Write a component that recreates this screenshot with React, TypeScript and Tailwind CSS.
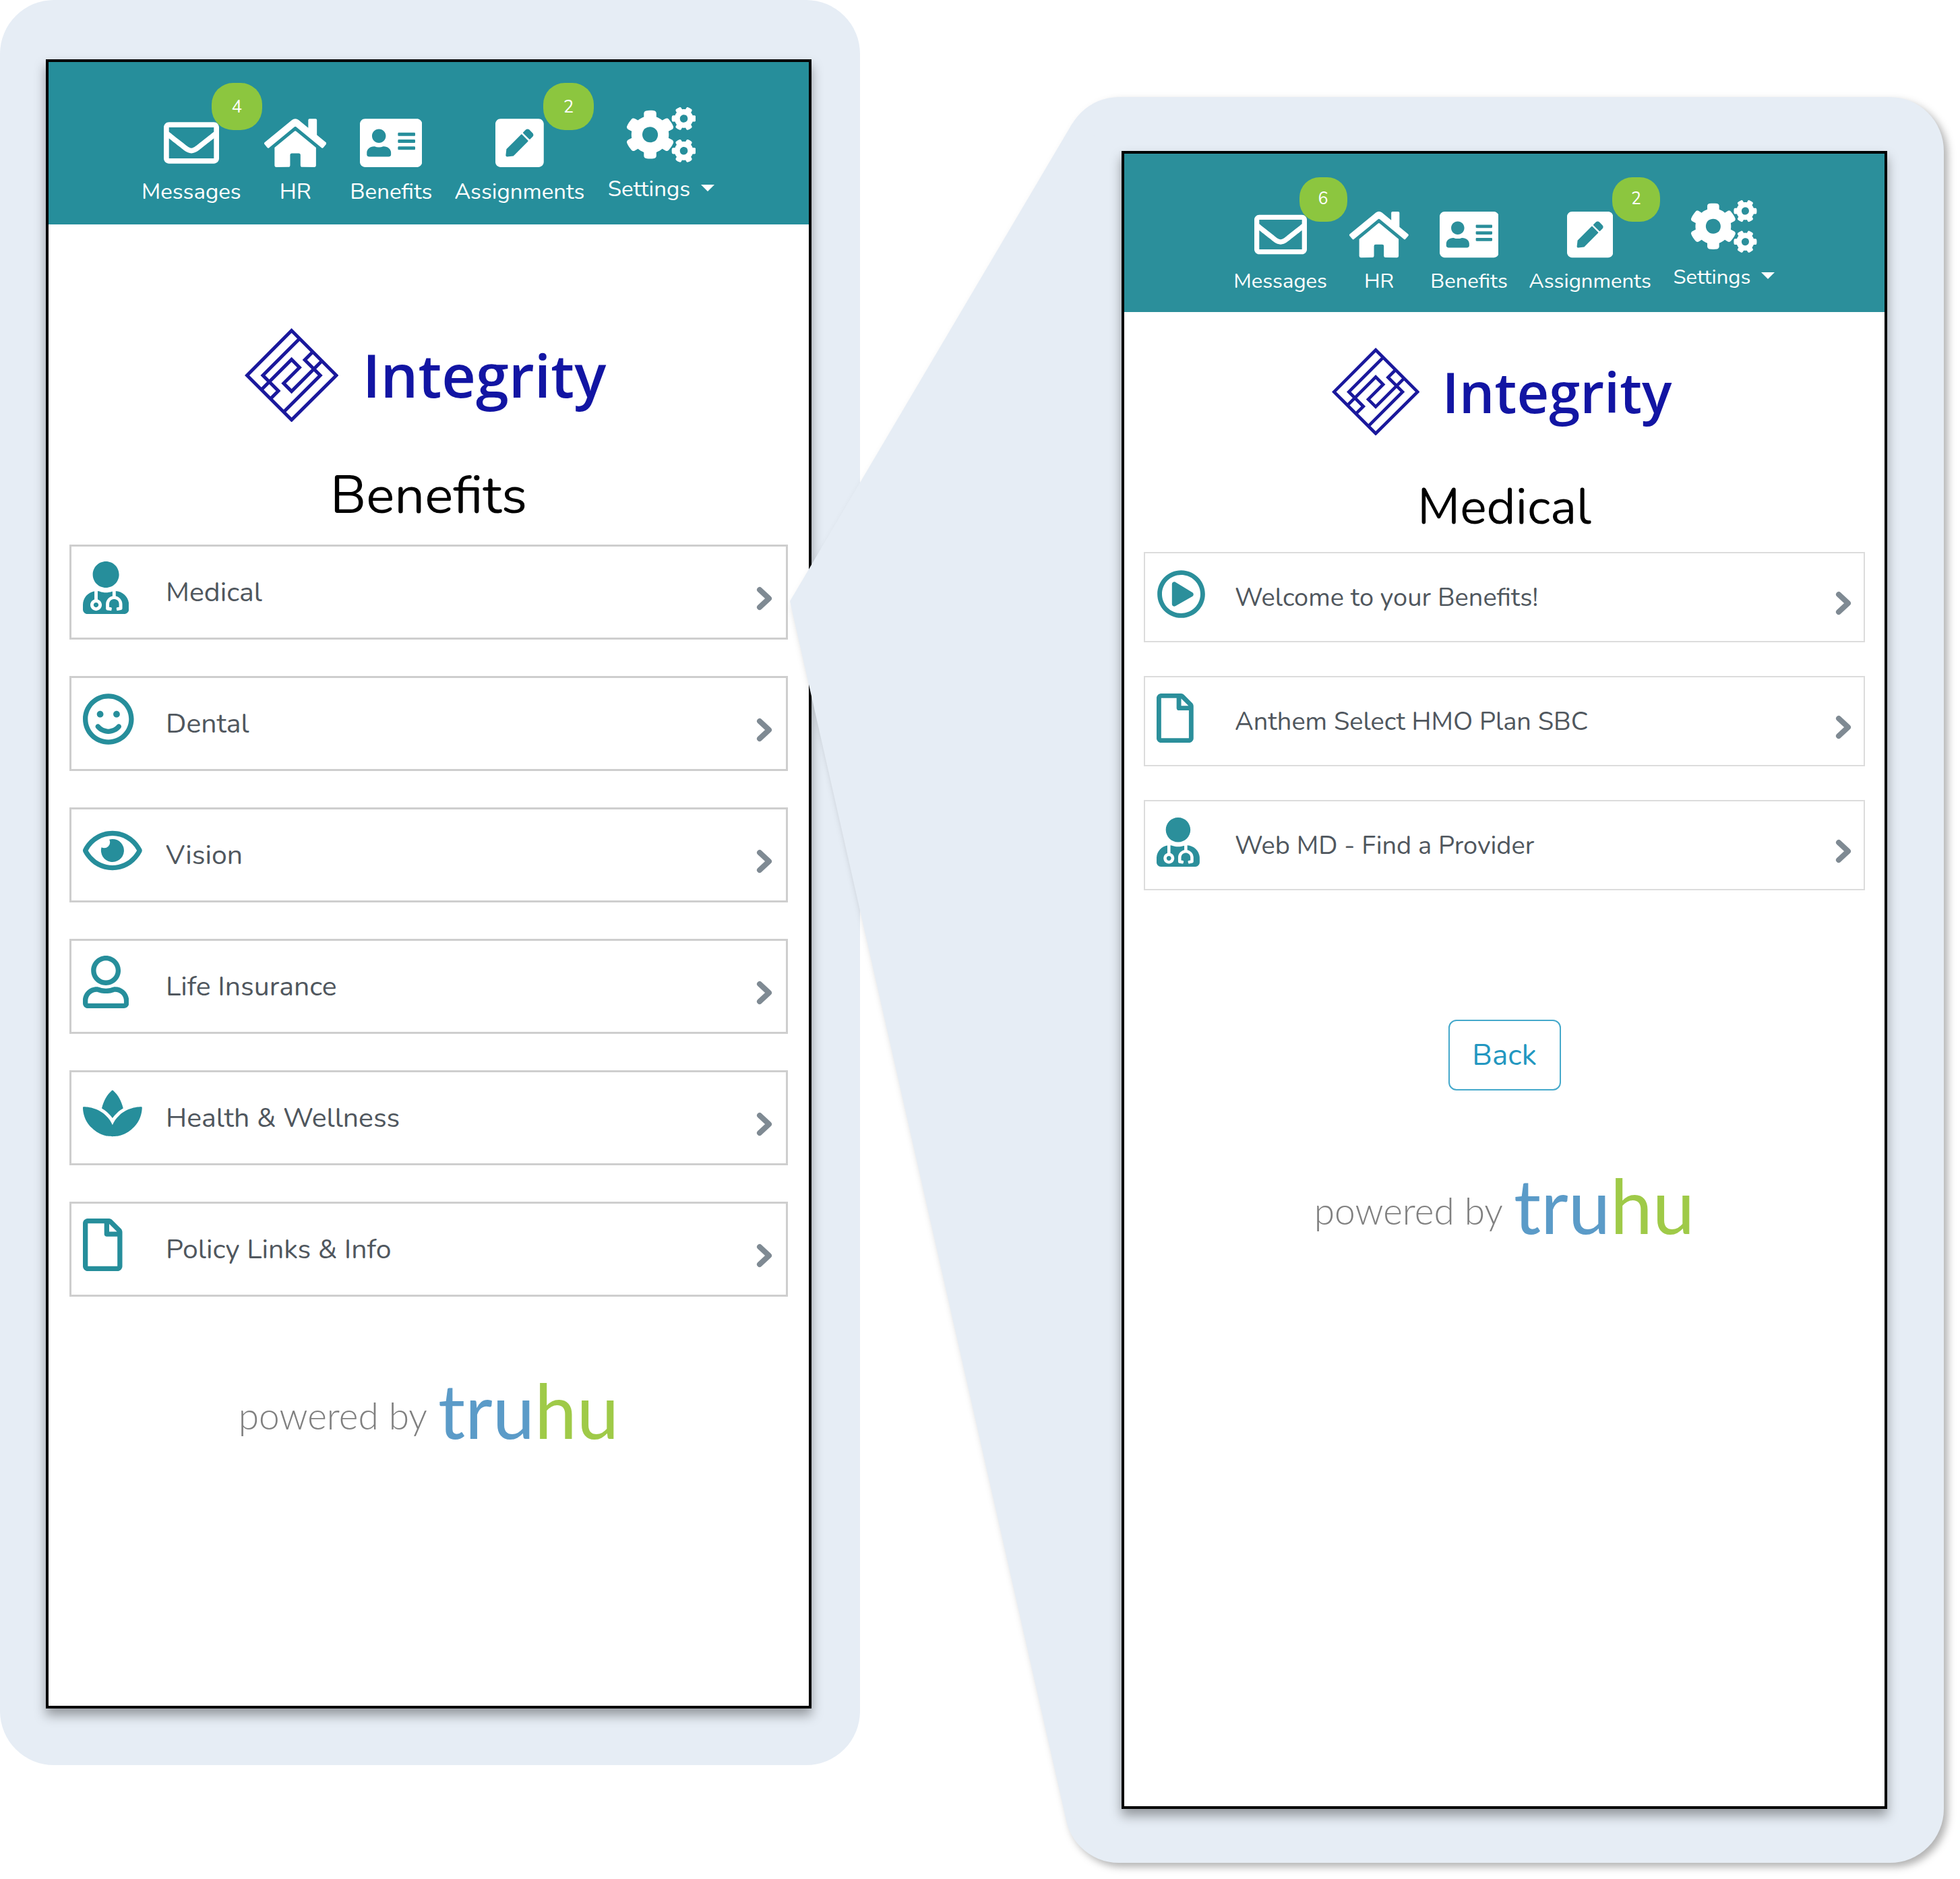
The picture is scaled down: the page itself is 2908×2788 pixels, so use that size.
import type { IconType } from "react-icons";
import {
  FaAddressCard,
  FaCogs,
  FaHome,
  FaPenSquare,
  FaRegEnvelope,
  FaRegEye,
  FaRegFile,
  FaRegPlayCircle,
  FaRegSmile,
  FaRegUser,
  FaSpa,
  FaUserMd,
} from "react-icons/fa";

type Size = "lg" | "md";
type Row = { icon: IconType; aspect: string; label: string };

const benefitRows: Row[] = [
  { icon: FaUserMd, aspect: "aspect-[7/8]", label: "Medical" },
  { icon: FaRegSmile, aspect: "aspect-[31/32]", label: "Dental" },
  { icon: FaRegEye, aspect: "aspect-[9/8]", label: "Vision" },
  { icon: FaRegUser, aspect: "aspect-[7/8]", label: "Life Insurance" },
  { icon: FaSpa, aspect: "aspect-[9/8]", label: "Health & Wellness" },
  { icon: FaRegFile, aspect: "aspect-[3/4]", label: "Policy Links & Info" },
];

const medicalRows: Row[] = [
  { icon: FaRegPlayCircle, aspect: "aspect-square", label: "Welcome to your Benefits!" },
  { icon: FaRegFile, aspect: "aspect-[3/4]", label: "Anthem Select HMO Plan SBC" },
  { icon: FaUserMd, aspect: "aspect-[7/8]", label: "Web MD - Find a Provider" },
];

function Badge({ count, size }: { count: number; size: Size }) {
  return (
    <span
      className={
        size === "lg"
          ? "absolute -top-12 left-[71px] flex h-[70px] w-[75px] items-center justify-center rounded-[32px] bg-[#8cc63f] text-[26px]"
          : "absolute -top-[46px] left-[67px] flex h-[66px] w-[71px] items-center justify-center rounded-[30px] bg-[#8cc63f] text-[25px]"
      }
    >
      {count}
    </span>
  );
}

function NavItem({
  icon: Icon,
  aspect,
  label,
  size,
  width,
  count,
}: {
  icon: IconType;
  aspect: string;
  label: string;
  size: Size;
  width: string;
  count?: number;
}) {
  return (
    <a href="#" className={`flex flex-col items-center ${width}`}>
      <span className="relative">
        <Icon className={`${size === "lg" ? "h-[82px] w-auto" : "h-[78px] w-auto"} ${aspect}`} />
        {count !== undefined && <Badge count={count} size={size} />}
      </span>
      <span
        className={
          size === "lg"
            ? "mt-3 text-[33px] leading-10 whitespace-nowrap"
            : "mt-2.5 text-[31px] leading-10 whitespace-nowrap"
        }
      >
        {label}
      </span>
    </a>
  );
}

function SettingsItem({ size }: { size: Size }) {
  return (
    <button type="button" className="flex flex-col items-center">
      <FaCogs
        className={size === "lg" ? "aspect-[5/4] h-[82px] w-auto" : "aspect-[5/4] h-[78px] w-auto"}
      />
      <span
        className={
          size === "lg"
            ? "mt-5 flex items-center gap-4 text-[33px] leading-10 whitespace-nowrap"
            : "mt-4 flex items-center gap-4 text-[31px] leading-10 whitespace-nowrap"
        }
      >
        Settings
        <span className="-mt-1 border-x-[10px] border-t-[10px] border-x-transparent border-t-white" />
      </span>
    </button>
  );
}

function IntegrityLogo({ size }: { size: Size }) {
  return (
    <div
      className={
        size === "lg"
          ? "flex items-center justify-center gap-9 pr-2.5"
          : "flex items-center justify-center gap-[34px] pr-2"
      }
    >
      <svg
        viewBox="0 0 139 139"
        className={size === "lg" ? "size-[139px]" : "size-[130px]"}
        fill="none"
        stroke="#1a189c"
        strokeWidth="5"
        aria-hidden="true"
      >
        <path d="M69.6 3.5 136 70 69.6 136 3.5 70Z" />
        <path d="M81.5 15.4 27 70l23 23-11.2 11.2" />
        <path d="M57.7 124.6 112.2 70l-23-23 11.2-11.2" />
        <path d="M25.3 90.7 69.6 46.4l11.8 11.8-23.6 23.6 11.8 11.8 44.3-44.3" />
      </svg>
      <span
        className={
          size === "lg"
            ? "font-['Open_Sans',sans-serif] text-[88px] leading-[139px] font-semibold text-[#1215a3]"
            : "font-['Open_Sans',sans-serif] text-[83px] leading-[130px] font-semibold text-[#1215a3]"
        }
      >
        Integrity
      </span>
    </div>
  );
}

function PoweredBy() {
  return (
    <footer className="flex items-end justify-center gap-4 font-['Lato',sans-serif]">
      <span className="pb-4 text-[55px] leading-[72px] font-light text-[#808080]">powered by</span>
      <span className="text-[112px] leading-[120px] text-[#5b9bc8]">
        tru<span className="text-[#9fca48]">hu</span>
      </span>
    </footer>
  );
}

function Chevron() {
  return (
    <svg
      viewBox="0 0 24 36"
      className="h-9 w-6"
      fill="none"
      stroke="#7f8a93"
      strokeWidth="8"
      strokeLinecap="round"
      strokeLinejoin="round"
      aria-hidden="true"
    >
      <path d="M5 5 19 18 5 31" />
    </svg>
  );
}

function RowList({ rows, size }: { rows: Row[]; size: Size }) {
  return (
    <ul className={size === "lg" ? "flex flex-col gap-[54px] px-[31px]" : "flex flex-col gap-[50px] px-[29px]"}>
      {rows.map(({ icon: Icon, aspect, label }) => (
        <li key={label}>
          <a
            href="#"
            className={
              size === "lg"
                ? "flex h-[141px] items-start border-[3px] border-[#cecece] pt-[22px] pr-5 pl-[17px]"
                : "flex h-[134px] items-start border-2 border-[#dcdcdc] pt-6 pr-[18px] pl-[17px]"
            }
          >
            <span className={size === "lg" ? "w-[123px] text-[#268e9b]" : "w-[116px] text-[#2b8f9b]"}>
              <Icon className={`${size === "lg" ? "h-[78px] w-auto" : "h-[73px] w-auto"} ${aspect}`} />
            </span>
            <span
              className={
                size === "lg"
                  ? "grow pt-4 text-[41px] leading-[60px] text-[#50575e]"
                  : "grow pt-3 text-[38px] leading-[60px] text-[#50575e]"
              }
            >
              {label}
            </span>
            <span className={size === "lg" ? "pt-[37px]" : "pt-8"}>
              <Chevron />
            </span>
          </a>
        </li>
      ))}
    </ul>
  );
}

export default function App() {
  return (
    <main className="flex items-start gap-[304px] bg-white pr-6 pb-6 font-['Nunito','Lato',sans-serif]">
      <section className="flex-1 rounded-[80px] bg-[#e6edf5] pt-[88px] pr-[72px] pb-[84px] pl-[68px]">
        <div className="min-h-[2447px] border-4 border-black bg-white shadow-[0_10px_16px_rgba(0,0,0,0.36)]">
          <nav className="flex h-[241px] items-start justify-center gap-9 bg-[#268e9b] pt-[67px] text-white">
            <div className="flex items-start gap-9 pt-3">
              <NavItem icon={FaRegEnvelope} aspect="aspect-square" label="Messages" size="lg" width="w-[144px]" count={4} />
              <NavItem icon={FaHome} aspect="aspect-[9/8]" label="HR" size="lg" width="w-[93px]" />
              <NavItem icon={FaAddressCard} aspect="aspect-[9/8]" label="Benefits" size="lg" width="w-[119px]" />
              <NavItem icon={FaPenSquare} aspect="aspect-[7/8]" label="Assignments" size="lg" width="w-[190px]" count={2} />
            </div>
            <SettingsItem size="lg" />
          </nav>
          <div className="pt-[154px]">
            <IntegrityLogo size="lg" />
            <h1 className="mt-[61px] mb-[25px] text-center text-[79px] leading-24 text-black">Benefits</h1>
            <RowList rows={benefitRows} size="lg" />
            <div className="pt-[108px]">
              <PoweredBy />
            </div>
          </div>
        </div>
      </section>

      <section className="relative mt-36 flex-1 px-[84px] py-20">
        {/* Callout bubble: rounded card plus the pointer that reaches the Medical row */}
        <div className="absolute inset-0 drop-shadow-[6px_6px_6px_rgba(0,0,0,0.3)]">
          <div className="size-full rounded-[80px] bg-[#e6edf5]" />
          <svg
            viewBox="0 0 490 2620"
            preserveAspectRatio="none"
            className="absolute top-0 -left-[408px] h-full w-[490px]"
            aria-hidden="true"
          >
            <path d="M0 748 419 39 489 80V2540L410 2557Z" fill="#e6edf5" />
          </svg>
        </div>
        <div className="relative min-h-[2460px] border-4 border-black bg-white shadow-[0_10px_16px_rgba(0,0,0,0.36)]">
          <nav className="flex h-[235px] items-start justify-center gap-[34px] bg-[#2b8f9b] pt-[69px] text-white">
            <div className="flex items-start gap-[34px] pt-3">
              <NavItem icon={FaRegEnvelope} aspect="aspect-square" label="Messages" size="md" width="w-[138px]" count={6} />
              <NavItem icon={FaHome} aspect="aspect-[9/8]" label="HR" size="md" width="w-[87px]" />
              <NavItem icon={FaAddressCard} aspect="aspect-[9/8]" label="Benefits" size="md" width="w-[112px]" />
              <NavItem icon={FaPenSquare} aspect="aspect-[7/8]" label="Assignments" size="md" width="w-[179px]" count={2} />
            </div>
            <SettingsItem size="md" />
          </nav>
          <div className="pt-[53px]">
            <IntegrityLogo size="md" />
            <h1 className="mt-[59px] mb-[18px] text-center text-[74px] leading-24 text-black">Medical</h1>
            <RowList rows={medicalRows} size="md" />
            <div className="flex justify-center pt-48">
              <button
                type="button"
                className="h-[105px] w-[167px] rounded-xl border-2 border-[#45a9cb] text-[44px] text-[#2397c0]"
              >
                Back
              </button>
            </div>
            <div className="pt-[110px]">
              <PoweredBy />
            </div>
          </div>
        </div>
      </section>
    </main>
  );
}
